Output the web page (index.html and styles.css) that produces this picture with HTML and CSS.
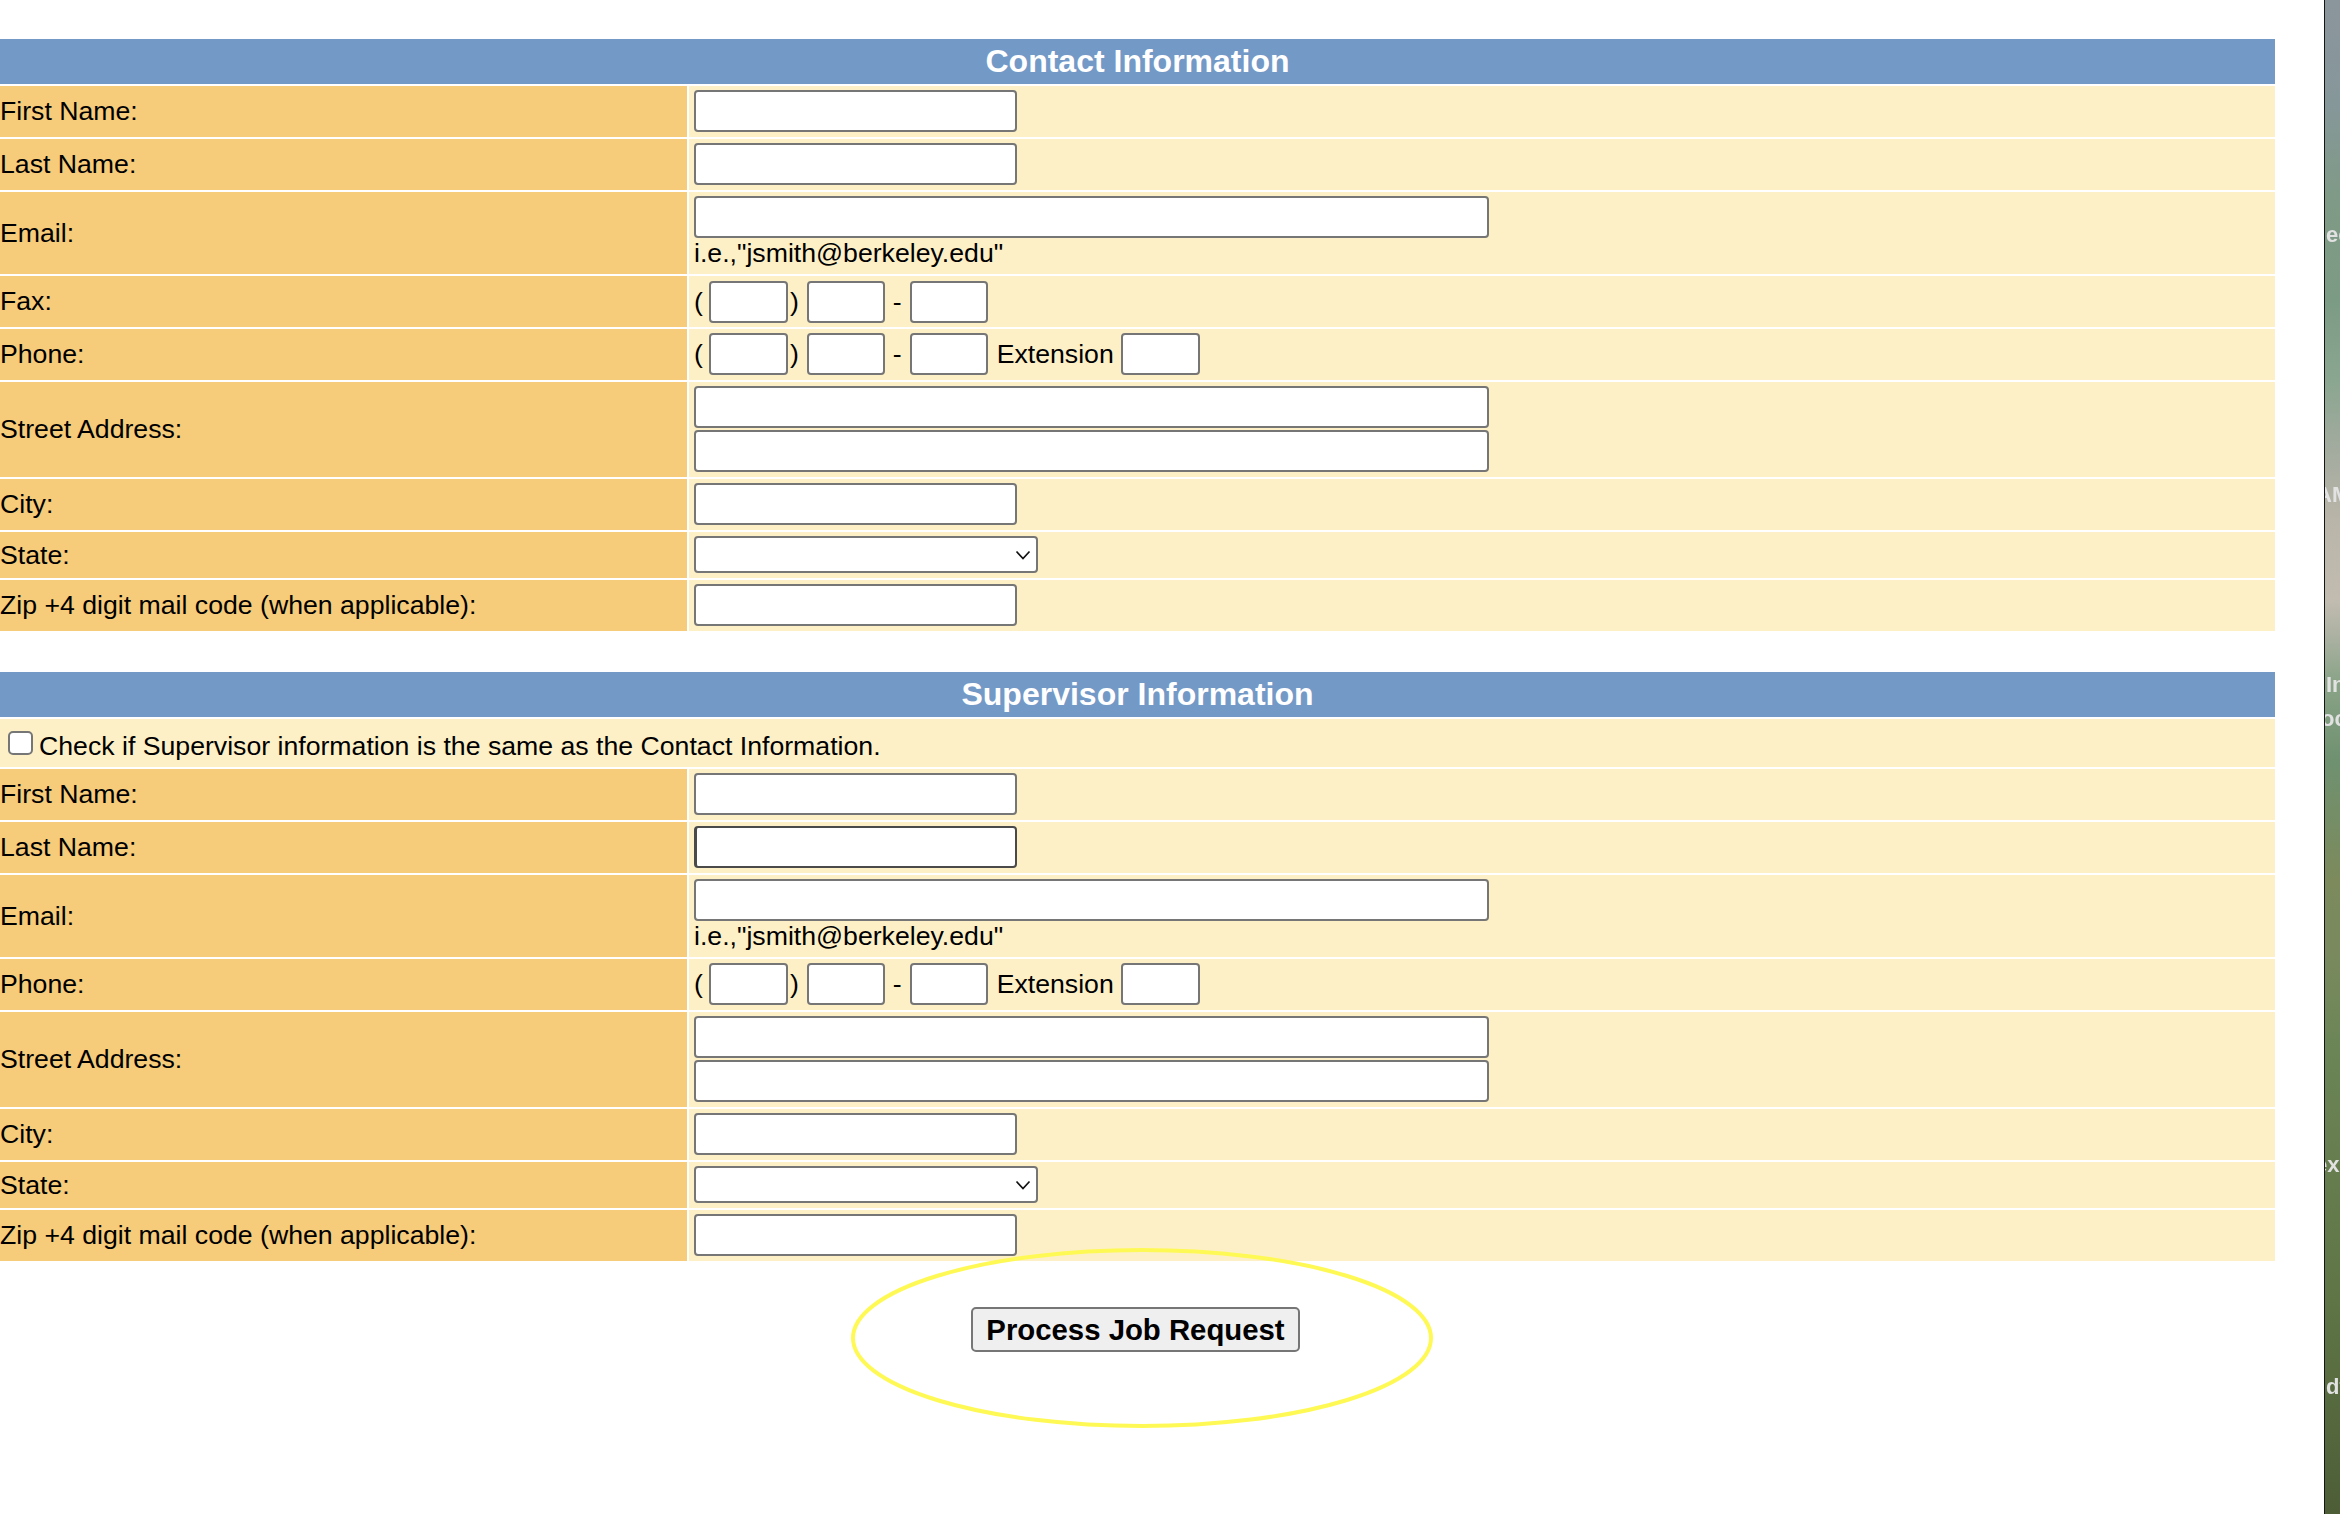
FILE: index.html
```html
<!DOCTYPE html>
<html lang="en">
<head>
<meta charset="utf-8">
<title>Job Request</title>
<link rel="stylesheet" href="styles.css">
</head>
<body>
<div class="screen">
  <main class="page">
    <form class="form">
      <section class="panel">
        <div class="panel-head">Contact Information</div>
        <div class="lbl">First Name:</div>
        <div class="val"><input class="txt" type="text"></div>
        <div class="lbl">Last Name:</div>
        <div class="val"><input class="txt" type="text"></div>
        <div class="lbl">Email:</div>
        <div class="val"><input class="txt wide" type="text"><div class="hint">i.e.,"jsmith@berkeley.edu"</div></div>
        <div class="lbl">Fax:</div>
        <div class="val tel tel-fax">
          <span class="ch">(</span><input class="box b1" type="text"><span class="ch c2">)</span><input class="box b2" type="text"><span class="ch c3">-</span><input class="box b3" type="text">
        </div>
        <div class="lbl">Phone:</div>
        <div class="val tel">
          <span class="ch">(</span><input class="box b1" type="text"><span class="ch c2">)</span><input class="box b2" type="text"><span class="ch c3">-</span><input class="box b3" type="text"><span class="ext">Extension</span><input class="box b4" type="text">
        </div>
        <div class="lbl">Street Address:</div>
        <div class="val stack"><input class="txt wide" type="text"><input class="txt wide" type="text"></div>
        <div class="lbl">City:</div>
        <div class="val"><input class="txt" type="text"></div>
        <div class="lbl">State:</div>
        <div class="val"><span class="sel"><select class="select"><option></option></select><svg class="chev" width="16" height="10" viewBox="0 0 16 10"><path d="M1.5 1.5 L8 8.5 L14.5 1.5" fill="none" stroke="#111" stroke-width="1.7"/></svg></span></div>
        <div class="lbl">Zip +4 digit mail code (when applicable):</div>
        <div class="val"><input class="txt" type="text"></div>
      </section>

      <section class="panel">
        <div class="panel-head">Supervisor Information</div>
        <div class="check"><input class="cb" type="checkbox">Check if Supervisor information is the same as the Contact Information.</div>
        <div class="lbl">First Name:</div>
        <div class="val"><input class="txt" type="text"></div>
        <div class="lbl">Last Name:</div>
        <div class="val"><input class="txt focus" type="text"></div>
        <div class="lbl">Email:</div>
        <div class="val"><input class="txt wide" type="text"><div class="hint">i.e.,"jsmith@berkeley.edu"</div></div>
        <div class="lbl">Phone:</div>
        <div class="val tel">
          <span class="ch">(</span><input class="box b1" type="text"><span class="ch c2">)</span><input class="box b2" type="text"><span class="ch c3">-</span><input class="box b3" type="text"><span class="ext">Extension</span><input class="box b4" type="text">
        </div>
        <div class="lbl">Street Address:</div>
        <div class="val stack"><input class="txt wide" type="text"><input class="txt wide" type="text"></div>
        <div class="lbl">City:</div>
        <div class="val"><input class="txt" type="text"></div>
        <div class="lbl">State:</div>
        <div class="val"><span class="sel"><select class="select"><option></option></select><svg class="chev" width="16" height="10" viewBox="0 0 16 10"><path d="M1.5 1.5 L8 8.5 L14.5 1.5" fill="none" stroke="#111" stroke-width="1.7"/></svg></span></div>
        <div class="lbl">Zip +4 digit mail code (when applicable):</div>
        <div class="val"><input class="txt" type="text"></div>
      </section>

      <div class="actions"><button class="submit" type="button">Process Job Request</button></div>
    </form>
    <svg class="circle" width="586" height="184" viewBox="0 0 586 184"><ellipse cx="293" cy="92" rx="289" ry="88" fill="none" stroke="#fff955" stroke-width="4"/></svg>
  </main>
  <aside class="desktop">
    <span class="frag f1">ec</span>
    <span class="frag f2">AM</span>
    <span class="frag f3">In</span>
    <span class="frag f4">oc</span>
    <span class="frag f5">ex</span>
    <span class="frag f6">dt</span>
  </aside>
</div>
</body>
</html>
```

FILE: styles.css
```css
html, body {
  margin: 0;
  padding: 0;
  background: #fff;
}
body {
  font-family: "Liberation Sans", Arial, Helvetica, sans-serif;
  color: #000;
}
.screen {
  display: flex;
  min-height: 1514px;
  overflow: hidden;
}
.page {
  flex: 1;
  position: relative;
  padding-top: 39px;
}
.form {
  margin: 0;
  width: 2275px;
}
.panel {
  width: 2275px;
  display: grid;
  grid-template-columns: 687px 1fr;
  gap: 2px;
}
.panel + .panel {
  margin-top: 41px;
}
.panel-head {
  grid-column: 1 / -1;
  height: 45px;
  background: #7399c7;
  color: #fff;
  font-weight: bold;
  font-size: 32px;
  display: flex;
  align-items: center;
  justify-content: center;
}
.lbl {
  background: #f6cb7a;
  font-size: 26.67px;
  display: flex;
  align-items: center;
}
.val {
  background: #fdf0c7;
  font-size: 26.67px;
  padding: 4px 0 5px 5px;
}
.txt {
  display: block;
  box-sizing: border-box;
  width: 323px;
  height: 42px;
  margin: 0;
  padding: 0 6px;
  border: 2px solid #767676;
  border-radius: 4px;
  background: #fff;
  font: inherit;
}
.txt.wide {
  width: 795px;
}
.txt.focus {
  border-color: #4a4a4a;
  border-left-width: 3px;
}
.stack .txt + .txt {
  margin-top: 2px;
}
.hint {
  line-height: 31px;
}
.tel {
  display: flex;
  align-items: center;
}
.tel-fax {
  padding-top: 5px;
  padding-bottom: 4px;
}
.box {
  box-sizing: border-box;
  width: 79px;
  height: 42px;
  margin: 0;
  padding: 0 4px;
  border: 2px solid #767676;
  border-radius: 4px;
  background: #fff;
  font: inherit;
}
.b1 { margin-left: 6px; }
.b2 { margin-left: 8px; width: 78px; }
.b3 { margin-left: 8px; width: 78px; }
.b4 { margin-left: 7px; }
.ch.c2 { margin-left: 2px; }
.ch.c3 { margin-left: 8px; }
.ext { margin-left: 9px; }
.sel {
  position: relative;
  display: block;
  width: 344px;
}
.select {
  display: block;
  box-sizing: border-box;
  width: 344px;
  height: 37px;
  margin: 0;
  border: 2px solid #767676;
  border-radius: 4px;
  background: #fff;
  -webkit-appearance: none;
  appearance: none;
  font: inherit;
}
.chev {
  position: absolute;
  right: 7px;
  top: 14px;
}
.check {
  grid-column: 1 / -1;
  background: #fdf0c7;
  font-size: 26.67px;
  padding: 12px 0 5px 0;
}
.cb {
  -webkit-appearance: none;
  appearance: none;
  box-sizing: border-box;
  width: 25px;
  height: 24px;
  margin: 0 6px 0 8px;
  border: 2px solid #767676;
  border-radius: 5px;
  background: #fff;
  vertical-align: baseline;
}
.actions {
  display: flex;
  justify-content: center;
  padding-top: 46px;
}
.submit {
  box-sizing: border-box;
  width: 329px;
  height: 45px;
  margin-right: 4px;
  padding: 0;
  border: 2px solid #767676;
  border-radius: 5px;
  background: #efefef;
  color: #000;
  font-family: "Liberation Sans", Arial, Helvetica, sans-serif;
  font-weight: bold;
  font-size: 29.33px;
}
.circle {
  position: absolute;
  left: 849px;
  top: 1246px;
}
.desktop {
  position: relative;
  width: 15px;
  flex: none;
  border-left: 1px solid #151515;
  overflow: hidden;
  background: linear-gradient(to bottom,
    #8b959c 0px, #86979a 100px, #7f9a86 200px, #7c9b84 300px, #8aa690 380px,
    #a3ab9f 450px, #b9b5a8 520px, #c2bcb0 600px, #a9b0a0 640px, #8ba488 680px,
    #6f9170 760px, #7c8a5c 880px, #7a8a5e 950px, #6b8557 1050px, #677e50 1150px,
    #5f7546 1300px, #4d5e37 1514px);
}
.frag {
  position: absolute;
  left: 1px;
  font-family: "Liberation Sans", Arial, sans-serif;
  font-weight: bold;
  font-size: 22px;
  color: #e2e2e2;
  filter: blur(0.6px);
  white-space: nowrap;
}
.f1 { top: 222px; }
.f2 { top: 482px; left: -9px; }
.f3 { top: 672px; }
.f4 { top: 706px; left: -4px; }
.f5 { top: 1152px; left: -10px; }
.f6 { top: 1374px; }
```
